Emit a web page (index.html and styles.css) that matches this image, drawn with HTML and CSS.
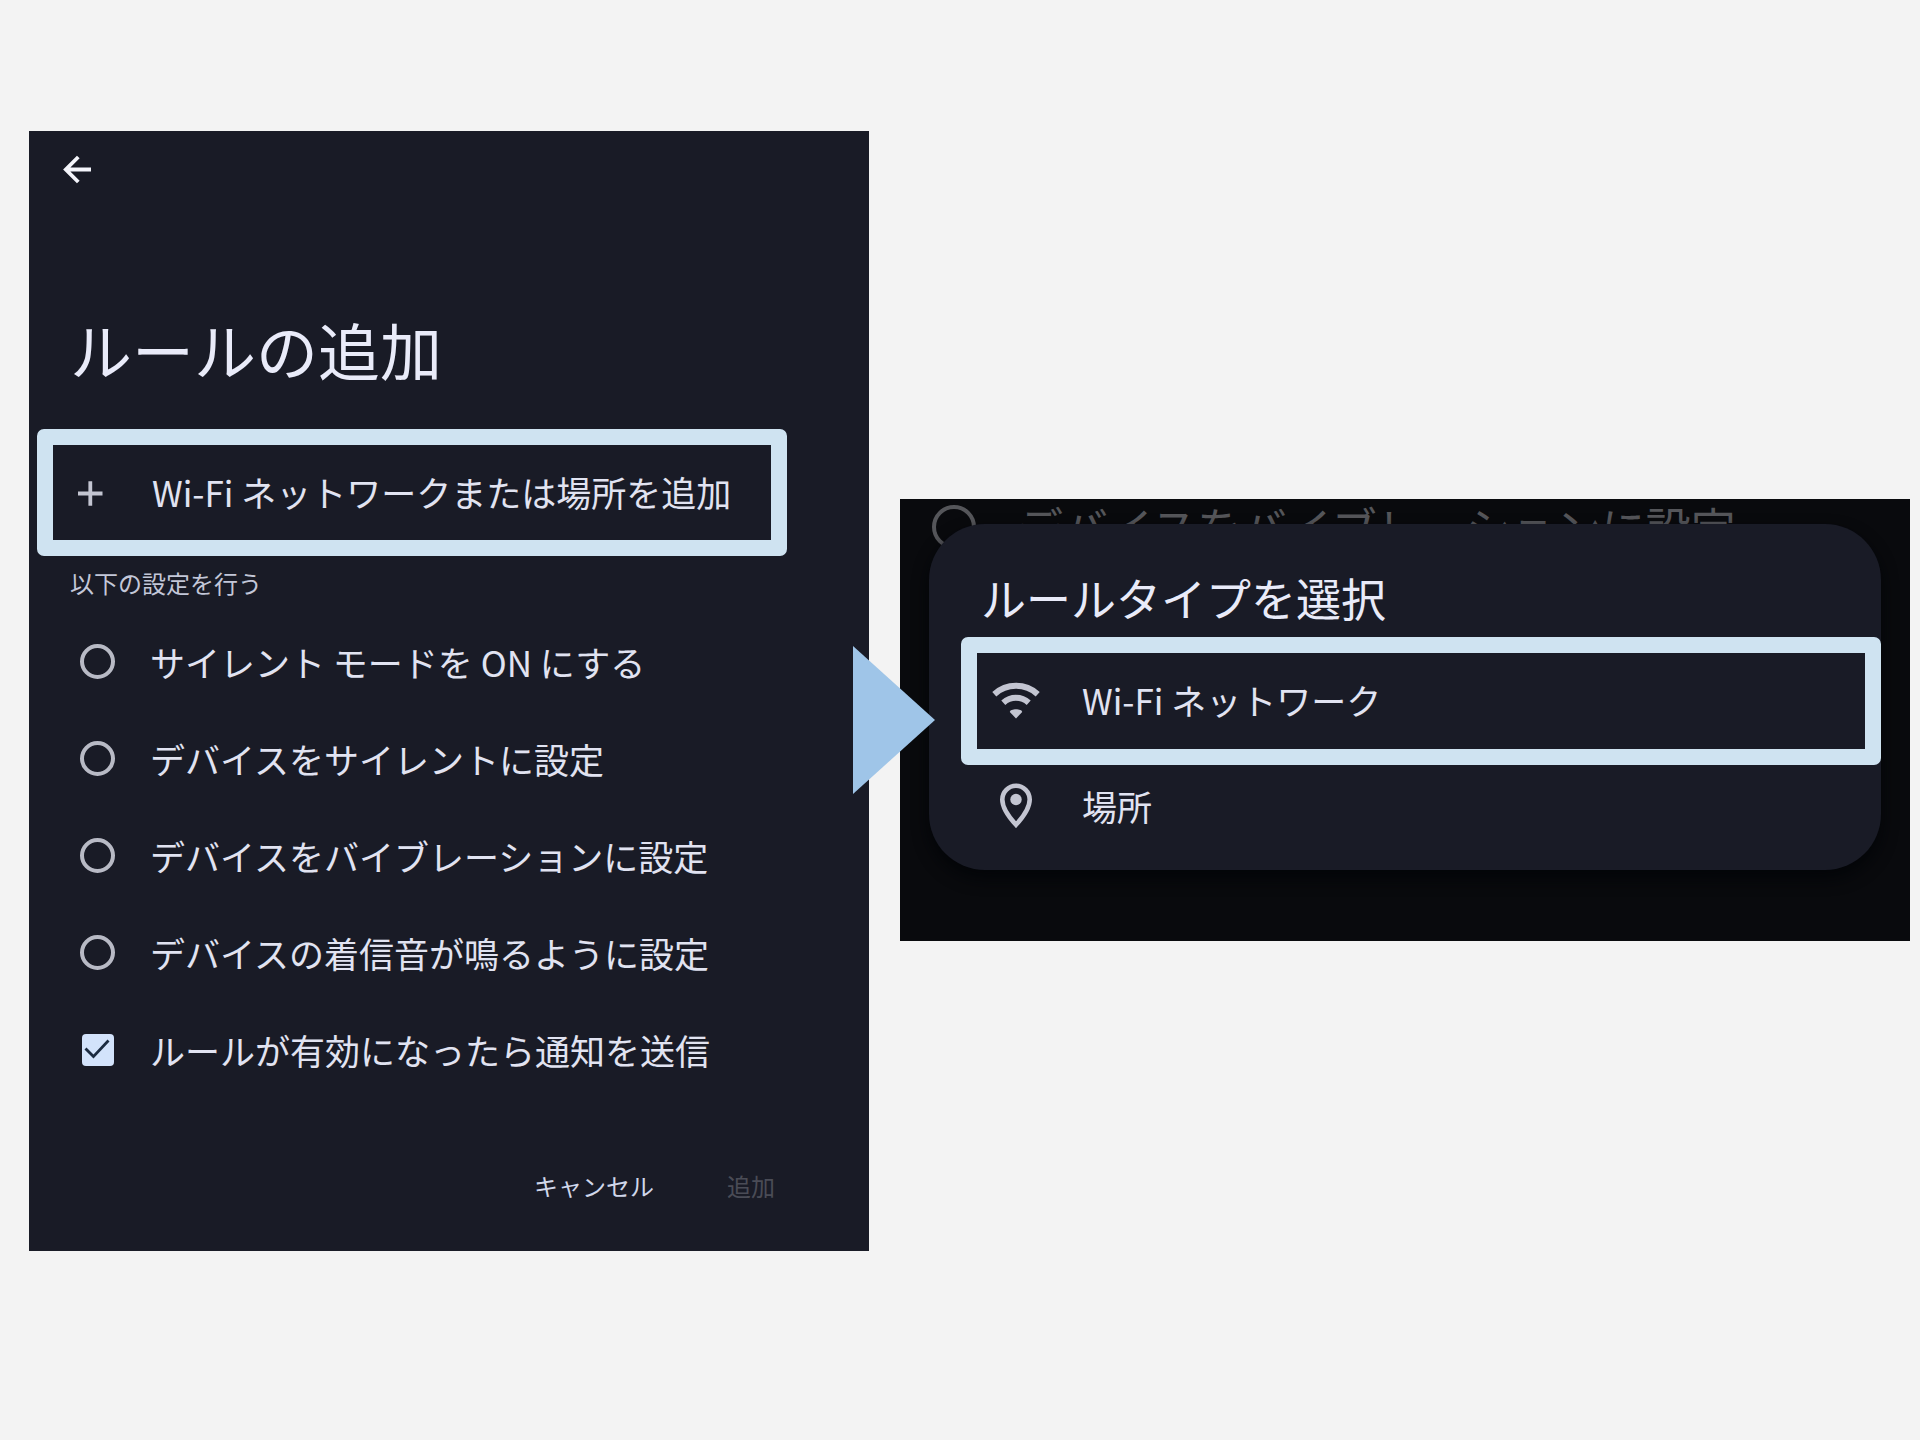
FILE: index.html
```html
<!DOCTYPE html>
<html lang="ja">
<head>
<meta charset="utf-8">
<meta name="viewport" content="width=device-width, initial-scale=1">
<title>ルールの追加</title>
<link rel="stylesheet" href="styles.css">
</head>
<body>
<main class="guide">
  <section class="screen">
    <button class="back" type="button" aria-label="戻る">
      <svg width="40" height="40" viewBox="0 0 40 40" fill="none" stroke="currentColor" stroke-width="3.800"><path d="M34 19.500H9M21.300 7 8.800 19.500l12.500 12.500"/></svg>
    </button>
    <h1 class="screen-title">ルールの追加</h1>
    <button class="row marked" type="button">
      <svg class="icon" width="40" height="40" viewBox="0 0 40 40" fill="none" stroke="currentColor" stroke-width="3.800"><path d="M8 20.500h24.500M20.300 8.200v24.500"/></svg>
      <span>Wi-Fi ネットワークまたは場所を追加</span>
    </button>
    <p class="caption">以下の設定を行う</p>
    <form class="options">
      <label class="option"><input class="radio" type="radio" name="action"><span>サイレント モードを ON にする</span></label>
      <label class="option"><input class="radio" type="radio" name="action"><span>デバイスをサイレントに設定</span></label>
      <label class="option"><input class="radio" type="radio" name="action"><span>デバイスをバイブレーションに設定</span></label>
      <label class="option"><input class="radio" type="radio" name="action"><span>デバイスの着信音が鳴るように設定</span></label>
      <label class="option"><input class="check" type="checkbox" checked><span>ルールが有効になったら通知を送信</span></label>
    </form>
    <div class="actions">
      <button class="action" type="button">キャンセル</button>
      <button class="action" type="button" disabled>追加</button>
    </div>
  </section>

  <section class="overlay">
    <label class="behind"><input class="radio" type="radio" name="behind" disabled><span>デバイスをバイブレーションに設定</span></label>
    <div class="dialog" role="dialog" aria-labelledby="dialog-title">
      <h2 class="dialog-title" id="dialog-title">ルールタイプを選択</h2>
      <button class="row marked" type="button">
        <svg class="icon" width="48" height="40" viewBox="0 0 48 40" fill="none" stroke="currentColor"><path stroke-width="6" d="M2.300 13.200C14.500 2 33.500 2 45.700 13.200"/><path stroke-width="6" d="M11.300 21.800c7.300-6.600 18.100-6.600 25.400 0"/><path fill="currentColor" stroke="none" d="M24 37.500 17.800 31C18 27.300 30 27.300 30.200 31z"/></svg>
        <span>Wi-Fi ネットワーク</span>
      </button>
      <button class="row" type="button">
        <svg class="icon" width="48" height="48" viewBox="0 0 48 48" fill="none" stroke="currentColor"><path stroke-width="4.600" stroke-linejoin="miter" d="M24 41.800C14.500 31.500 10.300 24 10.300 16.500a13.700 13.700 0 0 1 27.400 0C37.700 24 33.500 31.500 24 41.800z"/><circle cx="24" cy="16.500" r="5.700" fill="currentColor" stroke="none"/></svg>
        <span>場所</span>
      </button>
    </div>
    <svg class="pointer" width="82" height="148" viewBox="0 0 82 148" aria-hidden="true"><path fill="#9fc5e8" d="M0 0 82 74 0 148z"/></svg>
  </section>
</main>
</body>
</html>
```
FILE: styles.css
```css
* {
  box-sizing: border-box;
}

body {
  margin: 0;
  background: #f3f3f3;
  color: #e1e3f1;
  font-family: "Noto Sans CJK JP", sans-serif;
  font-size: 35px;
  line-height: 48px;
}

button {
  border: 0;
  background: none;
  color: inherit;
  font: inherit;
  padding: 0;
  cursor: pointer;
}

svg {
  display: block;
  flex: none;
}

.guide {
  display: grid;
  grid-template-columns: 840fr 1010fr;
  align-items: center;
  gap: 31px;
  min-height: 100vh;
  padding: 0 10px 0 29px;
}

/* First step: the rule form */
.screen {
  display: flex;
  flex-direction: column;
  margin-bottom: 58px;
  padding: 19px 0 41px;
  background: #191b26;
}

.back {
  align-self: flex-start;
  margin-left: 28px;
  color: #f4f5fb;
}

.screen-title {
  margin: 114px 0 0;
  padding-left: 41px;
  color: #e9ebf9;
  font-size: 62px;
  font-weight: 400;
  line-height: 90px;
}

.row {
  display: flex;
  align-items: center;
  gap: 42px;
  text-align: left;
  white-space: nowrap;
}

.row span {
  padding-bottom: 2px;
}

.icon {
  color: #c3c5d1;
}

.marked {
  height: 128px;
  border: 16px solid #cfe3f1;
  border-radius: 7px;
}

.screen .marked {
  height: 127px;
  margin: 35px 82px 0 8px;
  padding-left: 17px;
}

.caption {
  margin: 9px 0 0;
  padding-left: 41px;
  color: #c3c7d8;
  font-size: 24px;
  line-height: 36px;
}

.options {
  display: flex;
  flex-direction: column;
  padding-top: 12px;
}

.option {
  display: grid;
  grid-template-columns: 35px 1fr;
  align-items: center;
  gap: 35px;
  height: 97px;
  padding-left: 51px;
  white-space: nowrap;
}

.radio {
  appearance: none;
  width: 35px;
  height: 35px;
  margin: 0;
  border: 4px solid #b8bac5;
  border-radius: 50%;
}

.check {
  appearance: none;
  justify-self: center;
  width: 32px;
  height: 32px;
  margin: 0;
  border-radius: 4px;
  background: #d3e3fb;
}

.check:checked::before {
  content: "";
  display: block;
  height: 32px;
  background: #1b2b40;
  clip-path: polygon(3px 16px, 5px 14px, 12px 21px, 26px 6px, 28px 8px, 12px 25px);
}

.actions {
  display: flex;
  justify-content: flex-end;
  gap: 49px;
  margin-top: 64px;
  padding-right: 82px;
}

.action {
  padding: 0 12px;
  color: #d0d7ea;
  font-size: 24px;
}

.action:disabled {
  color: #4a4c56;
}

/* Second step: the rule type dialog over the dimmed form */
.overlay {
  position: relative;
  padding: 25px 29px 71px;
  background: #090a0d;
}

.behind {
  position: absolute;
  top: 6px;
  left: 32px;
  display: flex;
  align-items: center;
  gap: 42px;
  color: #55565a;
  font-size: 45px;
  line-height: 44px;
  white-space: nowrap;
}

.behind .radio {
  width: 44px;
  height: 44px;
  border: 4px solid #55565a;
}

.dialog {
  position: relative;
  display: flex;
  flex-direction: column;
  padding: 41px 0 21px 32px;
  border-radius: 56px;
  background: #191b26;
  box-shadow: 0 8px 16px #030508;
}

.dialog-title {
  margin: 0 0 6px;
  padding-left: 20px;
  color: #e9ebf9;
  font-size: 45px;
  font-weight: 400;
  line-height: 66px;
}

.dialog .row {
  height: 84px;
  padding-left: 31px;
}

.dialog .marked {
  height: 128px;
  padding-left: 15px;
}

.pointer {
  position: absolute;
  top: calc(50% - 74px);
  left: -47px;
}
```
